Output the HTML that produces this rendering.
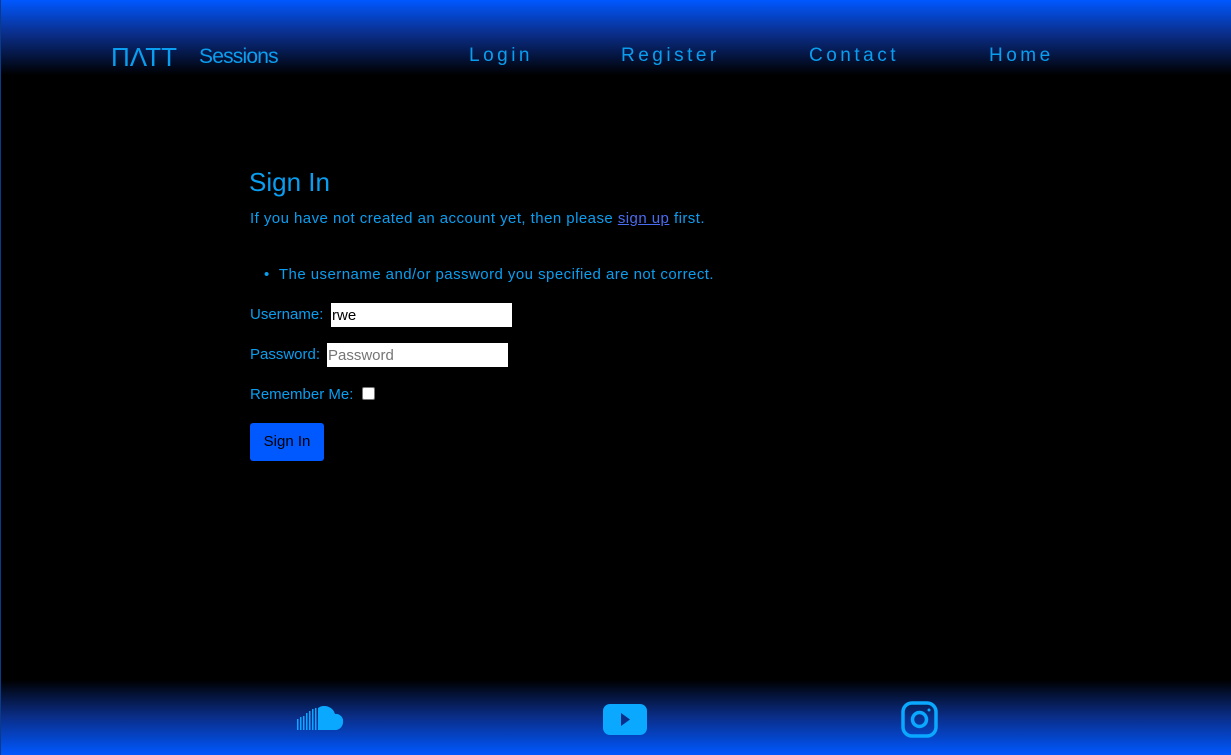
<!DOCTYPE html>
<html><head><style>
*{margin:0;padding:0;box-sizing:border-box}
body{width:1231px;height:755px;background:#000;font-family:"Liberation Sans",sans-serif;color:#0a9ef0;position:relative;overflow:hidden;border-left:1px solid #0a3a8a}
.hdr{position:absolute;left:0;top:0;width:1231px;height:75px;background:linear-gradient(#0058ff 0%,#0a2e8a 45%,#000 100%)}
.logo{position:absolute;left:110px;top:42px;font-size:26px;color:#0a9ef0;letter-spacing:0px;line-height:30px}
.ses{position:absolute;left:198px;top:45px;font-size:21px;letter-spacing:-0.8px}
.nav{position:absolute;top:45px;font-size:19px;letter-spacing:3.5px}
.ftr{position:absolute;left:0;top:680px;width:1231px;height:75px;background:linear-gradient(#000 0%,#0a2e8a 50%,#0058ff 100%)}
.c{position:absolute;left:249px;font-size:15px;letter-spacing:0.45px}
h1{position:absolute;left:248px;top:167px;font-size:26px;font-weight:normal}
a{color:#4a6cf0}
input[type=text]{position:absolute;height:24px;border:none;background:#fff;font-size:15px;padding-left:1px;font-family:"Liberation Sans",sans-serif}
</style></head><body>
<div class="hdr"></div>
<div class="logo">ΠΛΤΤ</div>
<div class="ses">Sessions</div>
<div class="nav" style="left:468px">Login</div>
<div class="nav" style="left:620px">Register</div>
<div class="nav" style="left:808px">Contact</div>
<div class="nav" style="left:988px">Home</div>
<h1>Sign In</h1>
<div class="c" style="top:210px">If you have not created an account yet, then please <a href="#">sign up</a> first.</div>
<div class="c" style="top:266px;left:263px">•&nbsp;&nbsp;The username and/or password you specified are not correct.</div>
<div class="c" style="top:306px;letter-spacing:0">Username:</div>
<input type="text" value="rwe" style="left:330px;top:303px;width:181px;color:#000">
<div class="c" style="top:346px;letter-spacing:0">Password:</div>
<input type="text" placeholder="Password" style="left:326px;top:343px;width:181px">
<div class="c" style="top:386px;letter-spacing:0">Remember Me:</div>
<div style="position:absolute;left:361px;top:387px;width:13px;height:13px;background:#fff;border:1px solid #777;border-radius:2px"></div>
<div style="position:absolute;left:249px;top:423px;width:74px;height:38px;background:#0058ff;border-radius:3px;color:#000;font-size:15px;text-align:center;line-height:38px">Sign In</div>
<div class="ftr"></div>
<svg style="position:absolute;left:296px;top:705px" width="52" height="27" viewBox="0 0 52 27">
<g fill="#0aa8ff"><rect x="0" y="14" width="1.5" height="11"/><rect x="3" y="12" width="1.5" height="13"/><rect x="6" y="11" width="1.5" height="14"/><rect x="9" y="8" width="1.5" height="17"/><rect x="12" y="6" width="1.5" height="19"/><rect x="15" y="4" width="1.5" height="21"/><rect x="18" y="3" width="1.5" height="22"/>
<path d="M21 25V3a11 11 0 0 1 17 6a7 7 0 0 1 8 8a8 8 0 0 1-7 8z"/></g></svg>
<svg style="position:absolute;left:602px;top:704px" width="44" height="32" viewBox="0 0 44 32">
<rect width="44" height="31" rx="7" fill="#0aa8ff"/><path d="M18 9v13l9-6.5z" fill="#0a2e8a"/></svg>
<svg style="position:absolute;left:900px;top:701px" width="37" height="37" viewBox="0 0 37 37" fill="none" stroke="#0aa8ff" stroke-width="3.5">
<rect x="2" y="2" width="33" height="33" rx="9"/><circle cx="18.5" cy="18.5" r="7"/><circle cx="28" cy="9" r="1.5" fill="#0aa8ff" stroke="none"/></svg>
</body></html>
